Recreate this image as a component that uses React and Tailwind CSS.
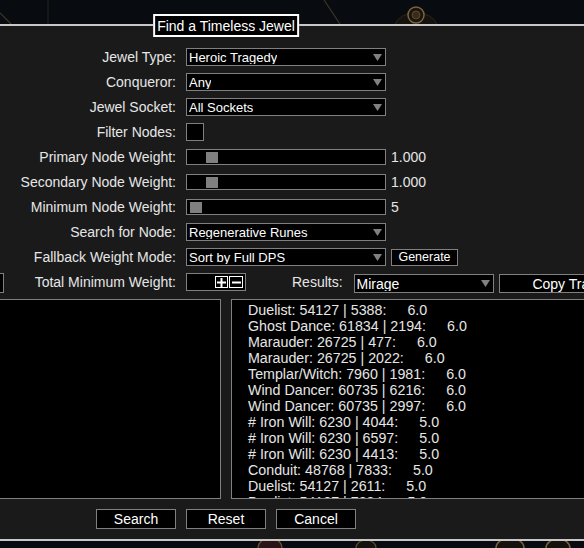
import React from 'react';

const ARROW = (
    <svg width="9" height="7" viewBox="0 0 9 7" className="mr-[3px] shrink-0">
        <polygon points="0,0 9,0 4.5,7" fill="#808080" />
    </svg>
);

const Dropdown = ({ value, width = 'w-[200px]', size = 'h-[18px] text-[13px]' }) => (
    <div className={`${width} ${size} shrink-0 border border-[#808080] bg-black text-white pl-[2px] flex items-center justify-between`}>
        <span className="truncate">{value}</span>
        {ARROW}
    </div>
);

const Slider = ({ knob, value }) => (
    <>
        <div className="w-[200px] h-[16px] shrink-0 border border-[#808080] bg-black flex items-center">
            <div className={`${knob} w-[12px] h-[11px] bg-[#808080]`}></div>
        </div>
        <span className="ml-[5px] text-[#e6e6e6]">{value}</span>
    </>
);

const Row = ({ label, children, lead }) => (
    <div className="flex h-[18px] items-center">
        <div className="w-[548px] shrink-0 flex items-center h-full">
            {lead}
            <span className="flex-1 text-right text-[#e6e6e6]">{label}</span>
        </div>
        <div className="ml-[10px] flex items-center h-full">{children}</div>
    </div>
);

const RESULTS = [
    ['Duelist: 54127 | 5388:', '6.0'],
    ['Ghost Dance: 61834 | 2194:', '6.0'],
    ['Marauder: 26725 | 477:', '6.0'],
    ['Marauder: 26725 | 2022:', '6.0'],
    ['Templar/Witch: 7960 | 1981:', '6.0'],
    ['Wind Dancer: 60735 | 6216:', '6.0'],
    ['Wind Dancer: 60735 | 2997:', '6.0'],
    ['# Iron Will: 6230 | 4044:', '5.0'],
    ['# Iron Will: 6230 | 6597:', '5.0'],
    ['# Iron Will: 6230 | 4413:', '5.0'],
    ['Conduit: 48768 | 7833:', '5.0'],
    ['Duelist: 54127 | 2611:', '5.0'],
    ['Duelist: 54127 | 7834:', '5.0'],
];

export default function App() {
    return (
        <div className="w-[584px] h-[548px] overflow-hidden bg-[#080b10] font-['Liberation_Sans',Arial,sans-serif] text-[14px] leading-none">
            {/* tree background, top */}
            <div className="h-[24px]">
                <svg width="584" height="24" viewBox="0 0 584 24">
                    <line x1="0" y1="13" x2="11" y2="24" stroke="#3b3627" strokeWidth="1.2" />
                    <line x1="48" y1="0" x2="48" y2="24" stroke="#24221c" strokeWidth="1" />
                    <line x1="324" y1="0" x2="340" y2="24" stroke="#3b3627" strokeWidth="1.2" />
                    <path d="M395 24 A22 16 0 0 1 437 24" fill="#15120d" stroke="#2e2718" strokeWidth="1" />
                    <circle cx="416" cy="15" r="8" fill="#1a140c" stroke="#7a6440" strokeWidth="1.5" />
                    <circle cx="416" cy="15" r="4" fill="#3a2c1c" stroke="#5a4a30" strokeWidth="1" />
                </svg>
            </div>

            {/* dialog */}
            <div className="relative -ml-[374px] w-[1200px] border-2 border-[#c8c8c8] bg-[#1a1a1a] pt-[22px] pb-[10px]">
                <div className="absolute left-1/2 -translate-x-1/2 top-[-12px] h-[23px] border-2 border-white bg-black px-[2px] flex items-center text-white">
                    Find a Timeless Jewel
                </div>

                <div className="flex flex-col gap-[7px]">
                    <Row label="Jewel Type:"><Dropdown value="Heroic Tragedy" /></Row>
                    <Row label="Conqueror:"><Dropdown value="Any" /></Row>
                    <Row label="Jewel Socket:"><Dropdown value="All Sockets" /></Row>
                    <Row label="Filter Nodes:">
                        <div className="w-[18px] h-[18px] border border-[#808080] bg-black"></div>
                    </Row>
                    <Row label="Primary Node Weight:"><Slider knob="ml-[19px]" value="1.000" /></Row>
                    <Row label="Secondary Node Weight:"><Slider knob="ml-[19px]" value="1.000" /></Row>
                    <Row label="Minimum Node Weight:"><Slider knob="ml-[3px]" value="5" /></Row>
                    <Row label="Search for Node:"><Dropdown value="Regenerative Runes" /></Row>
                    <Row label="Fallback Weight Mode:">
                        <Dropdown value="Sort by Full DPS" />
                        <div className="ml-[5px] w-[67px] h-[17px] border border-[#808080] bg-black text-white text-[12.5px] flex items-center justify-center">Generate</div>
                    </Row>
                    <Row
                        label="Total Minimum Weight:"
                        lead={<div className="self-start ml-[276px] w-[100px] h-[20px] border border-[#808080] bg-black"></div>}
                    >
                        <div className="w-[60px] h-[18px] border border-[#808080] bg-black flex items-center justify-end gap-[1px] pr-[2px]">
                            <div className="w-[13px] h-[12px] border border-white bg-black flex items-center justify-center">
                                <svg width="9" height="9" viewBox="0 0 9 9"><rect x="0" y="3.5" width="9" height="2" fill="#fff" /><rect x="3.5" y="0" width="2" height="9" fill="#fff" /></svg>
                            </div>
                            <div className="w-[14px] h-[12px] border border-white bg-black flex items-center justify-center">
                                <svg width="9" height="9" viewBox="0 0 9 9"><rect x="0" y="3.5" width="9" height="2" fill="#fff" /></svg>
                            </div>
                        </div>
                        <span className="ml-[46px] text-[#e6e6e6]">Results:</span>
                        <div className="ml-[11px] self-start mt-[1px]">
                            <Dropdown value="Mirage" width="w-[140px]" size="h-[19px] text-[14px]" />
                        </div>
                        <div className="ml-[5px] self-start mt-[1px] w-[172px] h-[19px] border border-[#808080] bg-black text-white flex items-center justify-center">Copy Trade URL</div>
                    </Row>
                </div>

                {/* result lists */}
                <div className="mt-[8px] h-[200px] flex gap-[10px] px-[10px]">
                    <div className="w-[583px] shrink-0 border border-[#808080] bg-black"></div>
                    <div className="w-[583px] shrink-0 border border-[#808080] bg-black overflow-hidden pl-[16px] pt-[2px] text-[14.25px] text-[#e6e6e6]">
                        {RESULTS.map(([name, score], i) => (
                            <div key={i} className="h-[16px] leading-[16px] whitespace-pre">
                                {name}<span className="ml-[21px]">{score}</span>
                            </div>
                        ))}
                    </div>
                </div>

                {/* buttons */}
                <div className="mt-[10px] flex justify-center gap-[10px]">
                    {['Search', 'Reset', 'Cancel'].map((b) => (
                        <div key={b} className="w-[80px] h-[20px] border border-[#808080] bg-black text-white flex items-center justify-center">{b}</div>
                    ))}
                </div>
            </div>

            {/* tree background, bottom */}
            <div className="h-[7px]">
                <svg width="584" height="7" viewBox="0 0 584 7">
                    <path d="M258 7 A12 10 0 0 1 282 7" fill="#2a1418" stroke="#6a5030" strokeWidth="1.5" />
                    <path d="M356 7 A10 8 0 0 1 376 7" fill="#15120d" stroke="#5a4a30" strokeWidth="1.2" />
                    <path d="M496 7 A14 10 0 0 1 524 7" fill="#15120d" stroke="#7a6440" strokeWidth="1.5" />
                    <path d="M546 7 A12 9 0 0 1 570 7" fill="#15120d" stroke="#7a6440" strokeWidth="1.5" />
                </svg>
            </div>
        </div>
    );
}
